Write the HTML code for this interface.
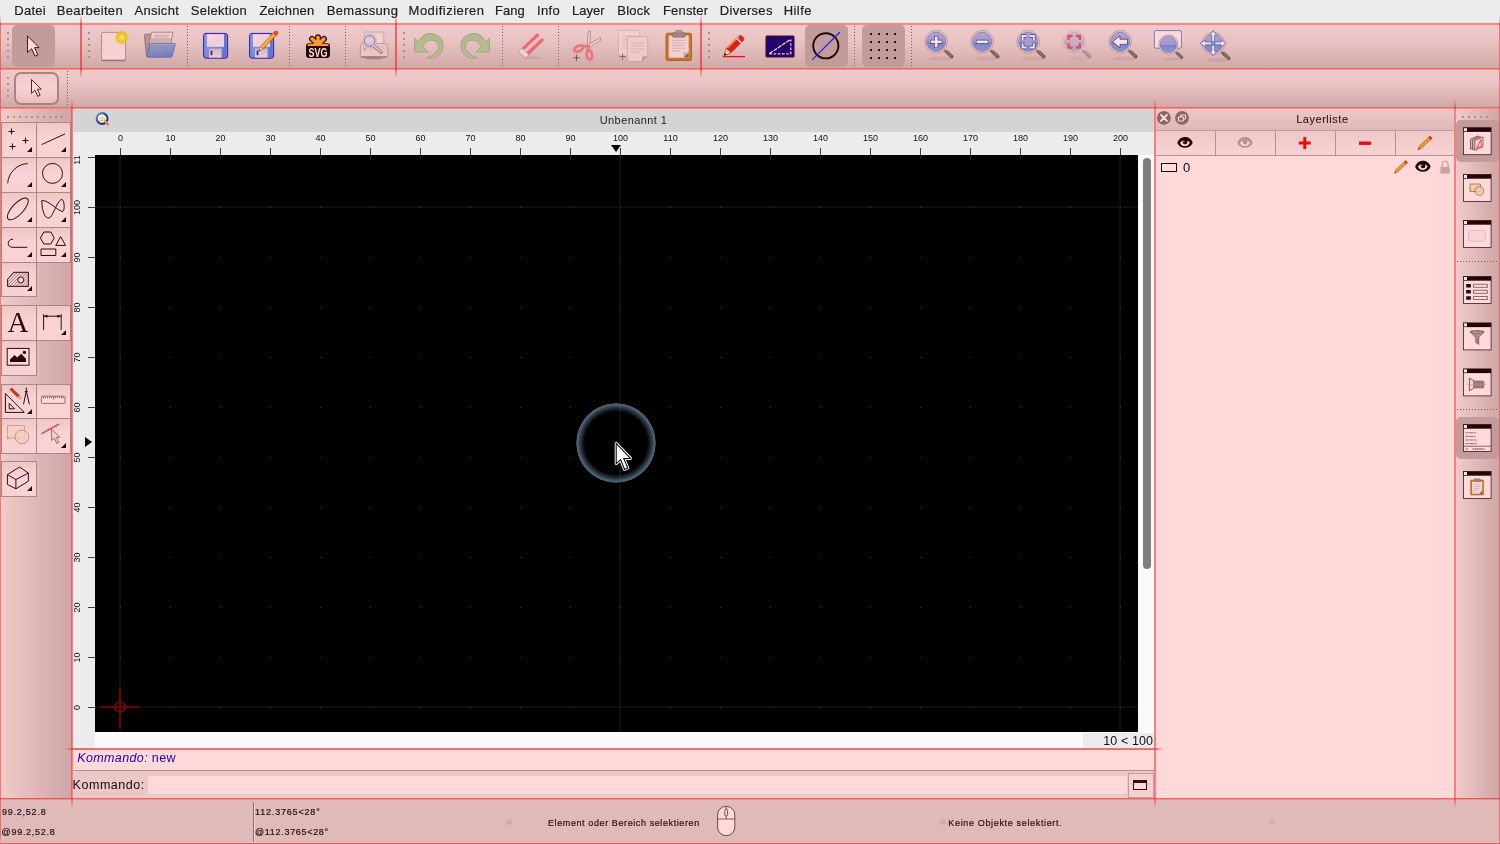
<!DOCTYPE html>
<html lang="de">
<head>
<meta charset="utf-8">
<title>QCAD - Unbenannt 1</title>
<style>
html,body{margin:0;padding:0;}
html{background:#ffd9d9;}
body{will-change:transform;width:1500px;height:844px;overflow:hidden;position:relative;background:transparent;font-family:"Liberation Sans",sans-serif;color:#1a0a0a;}
.abs,.abs *{position:absolute;}
div,span,svg{position:absolute;box-sizing:border-box;}
.t{white-space:nowrap;line-height:1;}
/* red debug lines */
.hl{height:2px;background:linear-gradient(rgba(228,40,40,0.64) 0 1px,rgba(245,60,60,0.5) 1px 2px);}
.vl{width:2px;background:rgba(240,40,40,0.64);}
.vf{background:linear-gradient(rgba(240,40,40,0) 0,rgba(240,40,40,0.64) 9px,rgba(240,40,40,0.64) calc(100% - 9px),rgba(240,40,40,0) 100%);}
.vs{background:linear-gradient(rgba(240,48,48,0) 0,rgba(240,48,48,0.54) 9px,rgba(240,48,48,0.54) calc(100% - 9px),rgba(240,48,48,0) 100%);}
.hf{background:linear-gradient(90deg,rgba(240,40,40,0) 0,rgba(240,40,40,0.64) 9px,rgba(240,40,40,0.64) calc(100% - 9px),rgba(240,40,40,0) 100%);}
#menubar{left:0;top:0;width:1500px;height:23px;background:#ececec;}
#menubar span{top:2.5px;font-size:13px;color:#1c1c1c;-webkit-text-stroke:0.18px #1c1c1c;line-height:16px;white-space:nowrap;transform-origin:0 50%;}
.tbh{background:linear-gradient(#f0caca 0%,#ebc5c5 30%,#dbb3b3 75%,#cfa8a8 100%);}
.tbv{background:linear-gradient(90deg,#f1cbcb 0%,#e9c2c2 22%,#dfb7b7 50%,#d6aeae 76%,#cea6a6 100%);}
.sel{background:#c39b9b;border-radius:5px;}
.dotv{width:1px;background:repeating-linear-gradient(#7a5a5a 0 1px,transparent 1px 3px);}
.doth{height:1px;background:repeating-linear-gradient(90deg,#7a5a5a 0 1px,transparent 1px 3px);}
.hdlv{width:2px;background:repeating-linear-gradient(#b08c8c 0 2px,transparent 2px 6px);}
.hdlh{height:2px;background:repeating-linear-gradient(90deg,#b08c8c 0 2px,transparent 2px 5px);}
.tool{width:35px;height:35px;border:1px solid #ae8585;background:linear-gradient(#eec6c6 0%,#f9d3d3 45%,#f8d2d2 100%);}
.tool svg{left:0;top:0;}
.corner{right:4.3px;bottom:5px;width:0;height:0;border-left:5px solid transparent;border-bottom:5px solid #1a0a0a;}
.ricon{width:24px;height:24px;}
</style>
</head>
<body>
<!-- menu bar -->
<div id="menubar">
<span style="left:14.2px;letter-spacing:0.3px">Datei</span>
<span style="left:56.8px;letter-spacing:0.33px">Bearbeiten</span>
<span style="left:134.5px;letter-spacing:0.27px">Ansicht</span>
<span style="left:190.7px;letter-spacing:0.31px">Selektion</span>
<span style="left:259.4px;letter-spacing:0.2px">Zeichnen</span>
<span style="left:326.7px;letter-spacing:0.32px">Bemassung</span>
<span style="left:408.6px;letter-spacing:0.48px">Modifizieren</span>
<span style="left:494.9px;letter-spacing:0.07px">Fang</span>
<span style="left:536.9px;letter-spacing:0.4px">Info</span>
<span style="left:572.0px;letter-spacing:0.0px">Layer</span>
<span style="left:617.2px;letter-spacing:0.28px">Block</span>
<span style="left:663.0px;letter-spacing:0.17px">Fenster</span>
<span style="left:719.8px;letter-spacing:0.29px">Diverses</span>
<span style="left:783.8px;letter-spacing:0.4px">Hilfe</span>
</div>
<!-- toolbar backgrounds -->
<div class="tbh" style="left:0;top:25px;width:1500px;height:43px"></div>
<div class="tbh" style="left:0;top:70px;width:1500px;height:37px"></div>
<div class="tbv" style="left:0;top:109px;width:72px;height:690px"></div>
<div class="tbv" style="left:1456px;top:109px;width:44px;height:690px"></div>
<!-- status bar -->
<div style="left:0;top:800px;width:1500px;height:44px;background:#e0b9b9"></div>
<!-- document area -->
<div style="left:73px;top:109px;width:1081px;height:23px;background:#d4d4d4"></div>
<div style="left:73px;top:109px;width:1081px;height:1px;background:#dcdfdf"></div>
<div class="t" style="left:599.7px;top:113.8px;font-size:11px;line-height:13px;letter-spacing:0.42px;color:#1f1f1f">Unbenannt 1</div>
<svg width="18" height="18" viewBox="93 110 18 18" style="left:93px;top:110px"><defs><linearGradient id="qg" x1="0" y1="0" x2="1" y2="1"><stop offset="0" stop-color="#8fa0cc"/><stop offset="0.45" stop-color="#2a468c"/><stop offset="1" stop-color="#1a2f78"/></linearGradient></defs><circle cx="102.1" cy="118.5" r="5.4" fill="#f4f4f6" stroke="url(#qg)" stroke-width="2.1"/><path d="M99 118.4 H105 M102 115.4 V121.4" stroke="#b8b8c0" stroke-width="0.6"/><path d="M99.4 120.6 H102.4" stroke="#e88" stroke-width="0.7"/><path d="M102.4 118.6 L107.2 123.6" stroke="#f5a21a" stroke-width="2.2" stroke-linecap="round"/><path d="M102.2 118.4 L103.6 119.8" stroke="#f6e3a0" stroke-width="1.6" stroke-linecap="round"/><circle cx="107.6" cy="124.2" r="1.2" fill="#e46a6a"/></svg>
<div style="left:73px;top:132px;width:1081px;height:23px;background:#ececec"></div>
<div style="left:73px;top:155px;width:22px;height:594px;background:#ececec"></div>
<div style="left:1138px;top:155px;width:16px;height:577px;background:#fafafa"></div>
<div style="left:95px;top:732px;width:1059px;height:17px;background:#fafafa"></div>
<div style="left:1143px;top:158px;width:8px;height:411px;border-radius:4px;background:#7e7e7e"></div>
<div style="left:1083px;top:732.6px;width:71px;height:15.4px;background:#ebebeb"></div>
<div class="t" style="left:1103.2px;top:733.6px;font-size:12.5px;line-height:15px;letter-spacing:0.12px;color:#111">10 &lt; 100</div>
<div id="canvas" style="left:95px;top:155px;width:1043px;height:577px;background:#000;overflow:hidden">
<div style="left:24px;top:0;width:2px;height:577px;background:#0e0e0e"></div>
<div style="left:524px;top:0;width:2px;height:577px;background:#0e0e0e"></div>
<div style="left:1024px;top:0;width:2px;height:577px;background:#0e0e0e"></div>
<div style="left:0;top:51px;width:1043px;height:2px;background:#0e0e0e"></div>
<div style="left:0;top:551px;width:1043px;height:2px;background:#0e0e0e"></div>
<svg width="1043" height="577" style="left:0;top:0"><defs><pattern id="gd" x="25" y="2" width="50" height="50" patternUnits="userSpaceOnUse"><rect x="0" y="0" width="1" height="1" fill="#3c3c3c"/></pattern></defs><rect width="1043" height="577" fill="url(#gd)"/>
<g stroke="#6c0000" stroke-width="2" fill="none"><line x1="5" y1="552" x2="45" y2="552"/><line x1="25" y1="532" x2="25" y2="572"/></g><circle cx="25" cy="552" r="5" fill="none" stroke="#ac0000" stroke-width="1.1"/>
<defs><radialGradient id="ring" cx="50%" cy="50%" r="50%"><stop offset="0.78" stop-color="#465868" stop-opacity="0"/><stop offset="0.88" stop-color="#465868" stop-opacity="0.55"/><stop offset="0.95" stop-color="#4e6476" stop-opacity="0.92"/><stop offset="0.985" stop-color="#52687a" stop-opacity="0.95"/><stop offset="1" stop-color="#52687a" stop-opacity="0"/></radialGradient></defs>
<circle cx="521" cy="288" r="40" fill="url(#ring)"/>
<path d="M521.2 288.4 L521.2 308.6 L525.6 304.6 L529.6 314.4 L532.8 313 L528.8 303.6 L535.6 303.4 Z" fill="#fff" stroke="#fff" stroke-width="3" stroke-linejoin="round"/><path d="M521.2 288.4 L521.2 308.6 L525.6 304.6 L529.6 314.4 L532.8 313 L528.8 303.6 L535.6 303.4 Z" fill="#fff" stroke="#0a0a0a" stroke-width="1.1" stroke-linejoin="miter"/>
</svg>
</div>
<div id="hruler" style="left:95px;top:132px;width:1059px;height:23px;overflow:hidden">
<div style="left:25px;top:16px;width:1px;height:7px;background:#3c3c3c"></div><div class="t" style="left:5px;top:0.6px;width:41px;text-align:center;font-size:9px;line-height:11px;color:#111">0</div>
<div style="left:75px;top:16px;width:1px;height:7px;background:#3c3c3c"></div><div class="t" style="left:55px;top:0.6px;width:41px;text-align:center;font-size:9px;line-height:11px;color:#111">10</div>
<div style="left:125px;top:16px;width:1px;height:7px;background:#3c3c3c"></div><div class="t" style="left:105px;top:0.6px;width:41px;text-align:center;font-size:9px;line-height:11px;color:#111">20</div>
<div style="left:175px;top:16px;width:1px;height:7px;background:#3c3c3c"></div><div class="t" style="left:155px;top:0.6px;width:41px;text-align:center;font-size:9px;line-height:11px;color:#111">30</div>
<div style="left:225px;top:16px;width:1px;height:7px;background:#3c3c3c"></div><div class="t" style="left:205px;top:0.6px;width:41px;text-align:center;font-size:9px;line-height:11px;color:#111">40</div>
<div style="left:275px;top:16px;width:1px;height:7px;background:#3c3c3c"></div><div class="t" style="left:255px;top:0.6px;width:41px;text-align:center;font-size:9px;line-height:11px;color:#111">50</div>
<div style="left:325px;top:16px;width:1px;height:7px;background:#3c3c3c"></div><div class="t" style="left:305px;top:0.6px;width:41px;text-align:center;font-size:9px;line-height:11px;color:#111">60</div>
<div style="left:375px;top:16px;width:1px;height:7px;background:#3c3c3c"></div><div class="t" style="left:355px;top:0.6px;width:41px;text-align:center;font-size:9px;line-height:11px;color:#111">70</div>
<div style="left:425px;top:16px;width:1px;height:7px;background:#3c3c3c"></div><div class="t" style="left:405px;top:0.6px;width:41px;text-align:center;font-size:9px;line-height:11px;color:#111">80</div>
<div style="left:475px;top:16px;width:1px;height:7px;background:#3c3c3c"></div><div class="t" style="left:455px;top:0.6px;width:41px;text-align:center;font-size:9px;line-height:11px;color:#111">90</div>
<div style="left:525px;top:16px;width:1px;height:7px;background:#3c3c3c"></div><div class="t" style="left:505px;top:0.6px;width:41px;text-align:center;font-size:9px;line-height:11px;color:#111">100</div>
<div style="left:575px;top:16px;width:1px;height:7px;background:#3c3c3c"></div><div class="t" style="left:555px;top:0.6px;width:41px;text-align:center;font-size:9px;line-height:11px;color:#111">110</div>
<div style="left:625px;top:16px;width:1px;height:7px;background:#3c3c3c"></div><div class="t" style="left:605px;top:0.6px;width:41px;text-align:center;font-size:9px;line-height:11px;color:#111">120</div>
<div style="left:675px;top:16px;width:1px;height:7px;background:#3c3c3c"></div><div class="t" style="left:655px;top:0.6px;width:41px;text-align:center;font-size:9px;line-height:11px;color:#111">130</div>
<div style="left:725px;top:16px;width:1px;height:7px;background:#3c3c3c"></div><div class="t" style="left:705px;top:0.6px;width:41px;text-align:center;font-size:9px;line-height:11px;color:#111">140</div>
<div style="left:775px;top:16px;width:1px;height:7px;background:#3c3c3c"></div><div class="t" style="left:755px;top:0.6px;width:41px;text-align:center;font-size:9px;line-height:11px;color:#111">150</div>
<div style="left:825px;top:16px;width:1px;height:7px;background:#3c3c3c"></div><div class="t" style="left:805px;top:0.6px;width:41px;text-align:center;font-size:9px;line-height:11px;color:#111">160</div>
<div style="left:875px;top:16px;width:1px;height:7px;background:#3c3c3c"></div><div class="t" style="left:855px;top:0.6px;width:41px;text-align:center;font-size:9px;line-height:11px;color:#111">170</div>
<div style="left:925px;top:16px;width:1px;height:7px;background:#3c3c3c"></div><div class="t" style="left:905px;top:0.6px;width:41px;text-align:center;font-size:9px;line-height:11px;color:#111">180</div>
<div style="left:975px;top:16px;width:1px;height:7px;background:#3c3c3c"></div><div class="t" style="left:955px;top:0.6px;width:41px;text-align:center;font-size:9px;line-height:11px;color:#111">190</div>
<div style="left:1025px;top:16px;width:1px;height:7px;background:#3c3c3c"></div><div class="t" style="left:1005px;top:0.6px;width:41px;text-align:center;font-size:9px;line-height:11px;color:#111">200</div>
</div>
<div id="vruler" style="left:73px;top:155px;width:22px;height:577px;overflow:hidden">
<div style="left:15px;top:552px;width:7px;height:1px;background:#3c3c3c"></div><div class="t" style="left:-15.700000000000003px;top:547px;width:41px;height:11px;text-align:center;font-size:9px;line-height:11px;color:#111;transform:rotate(-90deg)">0</div>
<div style="left:15px;top:502px;width:7px;height:1px;background:#3c3c3c"></div><div class="t" style="left:-15.700000000000003px;top:497px;width:41px;height:11px;text-align:center;font-size:9px;line-height:11px;color:#111;transform:rotate(-90deg)">10</div>
<div style="left:15px;top:452px;width:7px;height:1px;background:#3c3c3c"></div><div class="t" style="left:-15.700000000000003px;top:447px;width:41px;height:11px;text-align:center;font-size:9px;line-height:11px;color:#111;transform:rotate(-90deg)">20</div>
<div style="left:15px;top:402px;width:7px;height:1px;background:#3c3c3c"></div><div class="t" style="left:-15.700000000000003px;top:397px;width:41px;height:11px;text-align:center;font-size:9px;line-height:11px;color:#111;transform:rotate(-90deg)">30</div>
<div style="left:15px;top:352px;width:7px;height:1px;background:#3c3c3c"></div><div class="t" style="left:-15.700000000000003px;top:347px;width:41px;height:11px;text-align:center;font-size:9px;line-height:11px;color:#111;transform:rotate(-90deg)">40</div>
<div style="left:15px;top:302px;width:7px;height:1px;background:#3c3c3c"></div><div class="t" style="left:-15.700000000000003px;top:297px;width:41px;height:11px;text-align:center;font-size:9px;line-height:11px;color:#111;transform:rotate(-90deg)">50</div>
<div style="left:15px;top:252px;width:7px;height:1px;background:#3c3c3c"></div><div class="t" style="left:-15.700000000000003px;top:247px;width:41px;height:11px;text-align:center;font-size:9px;line-height:11px;color:#111;transform:rotate(-90deg)">60</div>
<div style="left:15px;top:202px;width:7px;height:1px;background:#3c3c3c"></div><div class="t" style="left:-15.700000000000003px;top:197px;width:41px;height:11px;text-align:center;font-size:9px;line-height:11px;color:#111;transform:rotate(-90deg)">70</div>
<div style="left:15px;top:152px;width:7px;height:1px;background:#3c3c3c"></div><div class="t" style="left:-15.700000000000003px;top:147px;width:41px;height:11px;text-align:center;font-size:9px;line-height:11px;color:#111;transform:rotate(-90deg)">80</div>
<div style="left:15px;top:102px;width:7px;height:1px;background:#3c3c3c"></div><div class="t" style="left:-15.700000000000003px;top:97px;width:41px;height:11px;text-align:center;font-size:9px;line-height:11px;color:#111;transform:rotate(-90deg)">90</div>
<div style="left:15px;top:52px;width:7px;height:1px;background:#3c3c3c"></div><div class="t" style="left:-15.700000000000003px;top:47px;width:41px;height:11px;text-align:center;font-size:9px;line-height:11px;color:#111;transform:rotate(-90deg)">100</div>
<div style="left:15px;top:2px;width:7px;height:1px;background:#3c3c3c"></div><div class="t" style="left:-15.700000000000003px;top:-3px;width:41px;height:11px;text-align:center;font-size:9px;line-height:11px;color:#111;transform:rotate(-90deg)">110</div>
</div>
<div style="left:611px;top:145px;width:0;height:0;border-left:5.5px solid transparent;border-right:5.5px solid transparent;border-top:7px solid #000"></div>
<div style="left:85px;top:437px;width:0;height:0;border-top:5.5px solid transparent;border-bottom:5.5px solid transparent;border-left:7px solid #000"></div>
<div style="left:73px;top:750px;width:1081px;height:48px;background:#ffd9d9"></div>
<div class="t" style="left:77.2px;top:750.8px;font-size:12.5px;line-height:15px;letter-spacing:0.38px;color:#1d00b4"><i>Kommando:</i> new</div>
<div style="left:73px;top:770px;width:1081px;height:1px;background:#b89090"></div>
<div style="left:73px;top:771px;width:1081px;height:27px;background:#ebc7c7"></div>
<div class="t" style="left:72.6px;top:778.1px;font-size:12.5px;line-height:15px;letter-spacing:0.54px;color:#1a0a0a">Kommando:</div>
<div style="left:148px;top:776px;width:979px;height:18px;background:#ffd9d9"></div>
<div style="left:1127.5px;top:772.5px;width:26px;height:25px;background:#f6cfcf;border:1px solid #c49a9a"></div>
<div style="left:1133.4px;top:780px;width:13.6px;height:9.6px;border:1px solid #2a1212;border-top:3px solid #2a1212;background:#ffd9d9"></div>
<!-- top toolbar: selected backgrounds, handles, separators -->
<div class="sel" style="left:12px;top:25px;width:43px;height:42px"></div>
<div class="sel" style="left:805px;top:25px;width:43px;height:42px"></div>
<div class="sel" style="left:862px;top:25px;width:43px;height:42px"></div>
<div class="hdlv" style="left:7px;top:32px;height:26px"></div>
<div class="hdlv" style="left:88px;top:32px;height:26px"></div>
<div class="hdlv" style="left:403px;top:32px;height:26px"></div>
<div class="hdlv" style="left:708px;top:32px;height:26px"></div>
<div class="dotv" style="left:187px;top:26px;height:40px"></div>
<div class="dotv" style="left:289px;top:26px;height:40px"></div>
<div class="dotv" style="left:345px;top:26px;height:40px"></div>
<div class="dotv" style="left:502px;top:26px;height:40px"></div>
<div class="dotv" style="left:558px;top:26px;height:40px"></div>
<div class="dotv" style="left:854px;top:26px;height:40px"></div>
<div class="dotv" style="left:911px;top:26px;height:40px"></div>
<!-- second row -->
<div class="hdlv" style="left:7px;top:77px;height:20px"></div>
<div style="left:14px;top:72px;width:45px;height:33px;border:2px solid #a98383;border-radius:7px;background:linear-gradient(#efc8c8 0%,#f7d1d1 50%,#e6bebe 100%)"></div>
<div class="dotv" style="left:67px;top:71px;height:35px"></div>
<svg id="tb1icons" width="1500" height="110" viewBox="0 0 1500 110" style="left:0;top:0">
<defs>
<linearGradient id="gLens" x1="0" y1="0" x2="0" y2="1"><stop offset="0" stop-color="#b2a6cf"/><stop offset="0.5" stop-color="#9a98cf"/><stop offset="0.52" stop-color="#7a82c4"/><stop offset="1" stop-color="#9098d0"/></linearGradient>
<linearGradient id="gFolder" x1="0" y1="0" x2="0.3" y2="1"><stop offset="0" stop-color="#9a94c0"/><stop offset="0.6" stop-color="#8a8cc0"/><stop offset="1" stop-color="#6e7ebc"/></linearGradient>
<linearGradient id="gUndo" x1="0" y1="0" x2="0" y2="1"><stop offset="0" stop-color="#a9b98c"/><stop offset="1" stop-color="#c4bb90"/></linearGradient>
<radialGradient id="gGlow"><stop offset="0" stop-color="#fff4d8"/><stop offset="0.22" stop-color="#f7da5a"/><stop offset="0.5" stop-color="#eec71e"/><stop offset="0.72" stop-color="#ecc51e" stop-opacity="0.85"/><stop offset="1" stop-color="#ecc520" stop-opacity="0"/></radialGradient>
<linearGradient id="gFlop" x1="0" y1="0" x2="1" y2="1"><stop offset="0" stop-color="#8a98e0"/><stop offset="1" stop-color="#6a7cd8"/></linearGradient><linearGradient id="gLabel" x1="0" y1="0" x2="1" y2="1"><stop offset="0" stop-color="#fadada"/><stop offset="0.5" stop-color="#ecd0de"/><stop offset="1" stop-color="#f8d6d8"/></linearGradient><linearGradient id="gShut" x1="0" y1="0" x2="0" y2="1"><stop offset="0" stop-color="#d8b4c4"/><stop offset="1" stop-color="#f0cccc"/></linearGradient>
<g id="mag">
<ellipse cx="5" cy="16.6" rx="12" ry="2" fill="#a07878" opacity="0.2"/>
<path d="M8.2 8.6 L11 11.2" stroke="#9a7474" stroke-width="2.2" stroke-linecap="round"/>
<path d="M10.6 10.2 L15.6 14.8" stroke="#7a5656" stroke-width="3.5" stroke-linecap="round"/>
<path d="M10.6 9.8 L15.4 14.2" stroke="#9b7a7a" stroke-width="1.2" stroke-linecap="round"/>
<circle cx="0" cy="0" r="11.3" fill="#f1cdc9" stroke="#b89292" stroke-width="0.9"/>
<circle cx="0" cy="0" r="9.6" fill="url(#gLens)" stroke="#7e78ad" stroke-width="0.8"/>
</g>
</defs>
<!-- pointer -->
<path d="M27.5 36 L27.5 52.6 L31.6 48.8 L35.1 56.2 L37.9 54.9 L34.6 47.6 L39.2 47.6 Z" fill="#ffd9d9" stroke="#3a1c1c" stroke-width="1" stroke-linejoin="round"/>
<path d="M31.5 79.5 L31.5 93.4 L34.9 90.2 L37.8 96.4 L40.1 95.3 L37.4 89.2 L41.3 89.2 Z" fill="#ffd9d9" stroke="#4a2a2a" stroke-width="1" stroke-linejoin="round"/>
<!-- new -->
<path d="M102.5 32.4 H124.5 Q125.5 32.4 125.5 33.4 V59 Q125.5 60 124.5 60 H102.5 Q101.5 60 101.5 59 V33.4 Q101.5 32.4 102.5 32.4 Z" fill="#f8d2d2" stroke="#ae8686" stroke-width="0.9"/><path d="M103 42.4 H103.8 M103 49.6 H103.8" stroke="#c9a4a4" stroke-width="0.8"/>
<path d="M101.5 60.6 H125.5" stroke="#9c7474" stroke-width="1.2"/>
<circle cx="121.7" cy="37.6" r="7.4" fill="url(#gGlow)"/>
<!-- open -->
<path d="M144.4 35.6 Q144.4 34.2 145.8 34.2 H151.6 L153 36 H160 V56.6 H146.6 Z" fill="#b99292" stroke="#8a6262" stroke-width="0.8" stroke-linejoin="round"/>
<path d="M151.6 32.2 H172.8 L170.8 44 H148.2 L146.8 56 Z" fill="#f4d0d0" stroke="#9c7474" stroke-width="0.8" stroke-linejoin="round"/>
<path d="M150.8 38 L170.9 38 L170.2 43.6 H149.4 Z" fill="#c9a2a2" opacity="0.75"/>
<path d="M154.4 35.2 H169.4 M154 36.8 H168.4" stroke="#c49c9c" stroke-width="0.8"/>
<path d="M151.6 43.4 H174.6 Q175.6 43.4 175.3 44.4 L172.2 56.2 Q171.9 57.3 170.8 57.3 H148 Q146.9 57.3 147.2 56.2 L150.2 44.4 Q150.5 43.4 151.6 43.4 Z" fill="url(#gFolder)" stroke="#6870b0" stroke-width="0.8" stroke-linejoin="round"/>
<path d="M151.6 44.6 H174" stroke="#b4b0d4" stroke-width="0.8" opacity="0.8"/>
<!-- save -->
<g id="floppy">
<rect x="203.6" y="33.4" width="24" height="24.8" rx="2.4" fill="url(#gFlop)" stroke="#2e1e9c" stroke-width="1"/>
<path d="M224.5 34.2 V57.4" stroke="#5b74d6" stroke-width="3.2"/>
<rect x="207" y="34.2" width="17" height="12.6" fill="url(#gLabel)"/>
<rect x="209" y="48.6" width="12.5" height="9" fill="url(#gShut)"/>
<rect x="210.6" y="50.6" width="1.8" height="4.6" fill="#2a2ab0"/>
</g>
<!-- save as -->
<use href="#floppy" x="46" y="0"/>
<path d="M262.98 49.31 L260.22 46.69 L275.02 31.09 Q276.6 30.6 277.6 31.6 Q278.4 32.6 277.78 33.71 Z" fill="#f49a1c" stroke="#b25a0a" stroke-width="0.6" stroke-linejoin="round"/>
<path d="M261.4 47.6 L275.8 32.2" stroke="#ffcf70" stroke-width="1"/>
<path d="M275.72 35.89 L272.96 33.27 L275.02 31.09 Q276.6 30.6 277.6 31.6 Q278.4 32.6 277.78 33.71 Z" fill="#e5483c"/>
<path d="M258.6 51.2 L260.22 46.69 L262.98 49.31 Z" fill="#f2d2b4" stroke="#9a6a4a" stroke-width="0.5" stroke-linejoin="round"/>
<path d="M258.6 51.2 L259.3 49.2 L260.5 50.4 Z" fill="#2a1a1a"/>
<!-- svg -->
<rect x="306" y="43.2" width="24" height="14.7" rx="2.8" fill="#230808"/>
<g stroke-linecap="round" fill="none">
<path d="M318 43.6 V37.3 M317.4 43.8 L312 38.9 M318.6 43.8 L324 38.9" stroke="#230808" stroke-width="5.9"/>
<path d="M318 43.6 V37.3 M317.4 43.8 L312 38.9 M318.6 43.8 L324 38.9" stroke="#fb9a2c" stroke-width="3.5"/>
</g>
<path d="M307.4 46.1 V45.2 Q307.6 44 309 44 H327 Q328.4 44 328.6 45.2 V46.1 Z" fill="#fb9a2c"/>
<path d="M311.6 44.4 L318 41 L324.4 44.4 Z" fill="#fb9a2c"/>
<text x="308.6" y="56.8" font-family="Liberation Sans, sans-serif" font-weight="bold" font-size="13.4" fill="#ffdede" textLength="19" lengthAdjust="spacingAndGlyphs">SVG</text>
<!-- print preview -->
<g>
<ellipse cx="374" cy="58.2" rx="9" ry="1.4" fill="#8a5e5e" opacity="0.55"/>
<path d="M364.4 32.6 Q364.4 32 365.2 32 H383 Q383.8 32 383.8 32.8 V46 H364.4 Z" fill="#efcaca" stroke="#c9a3a3" stroke-width="0.8"/>
<path d="M376.5 34.6 H381.6 V43 H376.5 Z" fill="#f6d3d3"/>
<path d="M363.4 43.6 H384.8 Q386.6 43.6 387.2 45.4 L387.8 48 V55.6 Q387.8 57.4 386 57.4 H362.2 Q360.4 57.4 360.4 55.6 V48 L361 45.4 Q361.6 43.6 363.4 43.6 Z" fill="#ecc5c5" stroke="#b28c8c" stroke-width="0.8"/>
<path d="M362.6 46 H385.6 V50.2 H362.6 Z" fill="#e2baba" opacity="0.8"/>
<path d="M361.4 56.9 H386.8" stroke="#94686a" stroke-width="1.2"/>
<circle cx="364.6" cy="49.2" r="0.6" fill="#7a5656"/>
<path d="M373.6 45.6 L381.2 52.2" stroke="#a78282" stroke-width="3.4" stroke-linecap="round"/>
<path d="M374.4 46.2 L381 51.8" stroke="#edcaca" stroke-width="1.4" stroke-linecap="round"/>
<circle cx="369.6" cy="40.9" r="6.8" fill="#efcccc" stroke="#c9a4a4" stroke-width="0.7"/>
<circle cx="369.6" cy="40.9" r="5.3" fill="#d6c4d6" stroke="#6f78bc" stroke-width="1"/>
<path d="M365 41.6 A4.7 4.7 0 0 1 374.2 41.6 Q369.6 43.8 365 41.6 Z" fill="#e6d0da" opacity="0.8"/>
</g>
<!-- undo -->
<path id="undo" d="M414.5 37.9 L414.7 52 L428 52 L422.8 46.6 Q425.6 40.6 431.5 40.1 Q437.8 40.4 438.6 46 Q438.8 51.6 433.4 55 Q430.4 56.8 427.4 57.4 Q426.8 58.2 428.4 58.4 Q437.4 58.8 441.6 51.6 Q445.4 42.8 439 36.4 Q432 31.4 424.2 35 Q420 37.6 418.2 41.9 Z" fill="url(#gUndo)" stroke="#93a378" stroke-width="0.9" stroke-linejoin="round" opacity="0.95"/>
<use href="#undo" transform="translate(904,0) scale(-1,1)"/>
<!-- eraser -->
<g opacity="0.9">
<ellipse cx="533" cy="57.6" rx="10" ry="1.3" fill="#c09898" opacity="0.6"/>
<path d="M518.4 51.6 L537.2 33.4 L543.8 40 L525.6 58 Z" fill="#e8636a" stroke="#d05058" stroke-width="0.5"/>
<path d="M521.8 48.4 L538.8 32.6 L541.4 35.2 L524.2 50.8 Z" fill="#f2caca" opacity="0.85" transform="translate(1.2,2.4)"/>
<path d="M518.4 51.6 L522 48.2 L528.8 54.8 L525.6 58 Z" fill="#f8d6d6" stroke="#c09090" stroke-width="0.5"/>
</g>
<!-- cut -->
<g opacity="0.95">
<path d="M588.4 31.4 L590.6 31 L589.6 48 L586.6 50.6 Z" fill="#f2cfcf" stroke="#8a6a6a" stroke-width="0.6"/>
<path d="M600.4 37.6 L600.8 40.4 L589.2 47.4 L588.8 44.4 Z" fill="#f2cfcf" stroke="#8a6a6a" stroke-width="0.6"/>
<ellipse cx="578.8" cy="48.5" rx="5" ry="2.6" transform="rotate(-24 578.8 48.5)" fill="none" stroke="#e8737c" stroke-width="2.8"/>
<ellipse cx="589.4" cy="55" rx="2.7" ry="4.6" transform="rotate(-8 589.4 55)" fill="none" stroke="#e8737c" stroke-width="2.8"/>
<path d="M583.8 46.6 L588.2 45.4 L588.6 50" stroke="#e8737c" stroke-width="2.4" fill="none" stroke-linejoin="round"/>
<path d="M573.2 57.8 H579.8 M576.5 54.5 V61.1" stroke="#5a3a3a" stroke-width="0.8"/>
</g>
<!-- copy -->
<g opacity="0.9">
<path d="M618.6 30.4 H638 Q639.6 30.4 639.6 32 V55.6 H618.6 Z" fill="#f3cfcf" stroke="#cfa8a8" stroke-width="0.7"/>
<path d="M621.6 36 H636 M621.6 39 H636 M621.6 42 H627 M621.6 45 H627 M621.6 48 H627" stroke="#d9b4b4" stroke-width="0.8"/>
<path d="M627.2 36.6 H646 Q647.8 36.6 647.8 38.4 V56 L642 61.4 H628.8 Q627.2 61.4 627.2 59.8 Z" fill="#f1cccc" stroke="#c49c9c" stroke-width="0.8"/>
<path d="M631 43 H644.4 M631 46 H644.4 M631 49 H644.4 M631 52 H640" stroke="#d2abab" stroke-width="0.8"/>
<path d="M647.6 56 L642 61.2 L642 56.8 Z" fill="#b89292"/>
<path d="M619.4 56.6 H625.8 M622.6 53.4 V59.8" stroke="#6a4646" stroke-width="0.8"/>
</g>
<!-- paste -->
<rect x="666" y="33.2" width="25.6" height="27.2" rx="1.6" fill="#c87422" stroke="#a85c14" stroke-width="0.8"/>
<path d="M666.4 60.6 H691.2" stroke="#8a5a3a" stroke-width="0.8" opacity="0.5"/>
<path d="M668.8 35.6 H688.8 V57.8 H668.8 Z" fill="#f4cfcf" stroke="#d8a878" stroke-width="0.5"/>
<path d="M672 40.4 H685.6 M672 43 H685.6 M672 45.6 H684 M672 48.2 H685.6 M672 50.8 H680" stroke="#d0a6a6" stroke-width="0.8"/>
<path d="M688.6 52.6 L683.6 57.6 H688.6 Z" fill="#7a6060"/>
<path d="M683.6 52.6 H688.6 L683.6 57.6 Z" fill="#c8a4a4"/>
<rect x="672.4" y="32.6" width="12.8" height="4.6" rx="1" fill="#a88484" stroke="#8a6868" stroke-width="0.6"/>
<rect x="675.6" y="30.4" width="6.4" height="3" rx="0.8" fill="#b89494" stroke="#8a6868" stroke-width="0.6"/>
<!-- pencil with red line -->
<path d="M723 56.6 H745" stroke="#ee1111" stroke-width="1.3"/>
<path d="M724 55.6 L726.2 48.6 L738.4 36.2 Q740 34.6 742.4 36.4 Q744.6 38.6 743.2 40.4 L731 52.8 Z" fill="#df2218" stroke="#8c3a10" stroke-width="0.7" stroke-linejoin="round"/>
<path d="M727.6 47.8 L739.2 36" stroke="#ff8a6a" stroke-width="1.4"/>
<path d="M737.2 37.6 L741.8 42 L740.6 43.2 L736 38.8 Z" fill="#e8c8c8"/>
<path d="M724 55.6 L726.2 48.6 L731 52.8 Z" fill="#f0cdb0" stroke="#8c5a3a" stroke-width="0.5"/>
<path d="M724 55.6 L724.9 52.9 L726.6 54.4 Z" fill="#1a0a0a"/>
<!-- draft mode -->
<rect x="766" y="36" width="28" height="21" rx="1" fill="#23006e" stroke="#3c1630" stroke-width="1.1"/>
<path d="M769.4 53.6 L790.6 39.4" stroke="#ffe4e4" stroke-width="1.2" stroke-dasharray="4.2 0.9"/>
<path d="M769.4 53.8 H790.8 V39.4" stroke="#e8d0f0" stroke-width="1.3" fill="none" stroke-dasharray="2.6 1.6"/>
<!-- circle / line -->
<circle cx="825.8" cy="45.8" r="12.6" fill="none" stroke="#1c0606" stroke-width="1.9"/>
<path d="M812.2 59.8 L840 32" stroke="#2222dd" stroke-width="1.2"/>
<!-- grid dots -->
<g fill="#2a1010">
<rect x="870" y="33" width="2" height="2"/><rect x="878" y="33" width="2" height="2"/><rect x="886" y="33" width="2" height="2"/><rect x="894" y="33" width="2" height="2"/>
<rect x="870" y="41" width="2" height="2"/><rect x="878" y="41" width="2" height="2"/><rect x="886" y="41" width="2" height="2"/><rect x="894" y="41" width="2" height="2"/>
<rect x="870" y="49" width="2" height="2"/><rect x="878" y="49" width="2" height="2"/><rect x="886" y="49" width="2" height="2"/><rect x="894" y="49" width="2" height="2"/>
<rect x="870" y="57" width="2" height="2"/><rect x="878" y="57" width="2" height="2"/><rect x="886" y="57" width="2" height="2"/><rect x="894" y="57" width="2" height="2"/>
</g>
<!-- zoom in -->
<use href="#mag" x="936.2" y="41.8"/>
<path d="M930.2 41.8 H942.2 M936.2 35.8 V47.8" stroke="#4a4a9a" stroke-width="4.2"/>
<path d="M930.8 41.8 H941.6 M936.2 36.4 V47.2" stroke="#ffe0e0" stroke-width="2.6"/>
<!-- zoom out -->
<use href="#mag" x="982.2" y="41.8"/>
<path d="M976 41.8 H988.4" stroke="#4a4a9a" stroke-width="4.2"/>
<path d="M976.6 41.8 H987.8" stroke="#ffe0e0" stroke-width="2.6"/>
<!-- zoom auto -->
<use href="#mag" x="1028.2" y="41.8"/>
<rect x="1024.6" y="38.6" width="7.2" height="6.4" fill="#a8a0cc"/>
<path d="M1022.6 40 V36 H1026.6 M1029.8 36 H1033.8 V40 M1033.8 43.6 V47.6 H1029.8 M1026.6 47.6 H1022.6 V43.6" fill="none" stroke="#3c3c90" stroke-width="3.4"/>
<path d="M1022.6 40 V36 H1026.6 M1029.8 36 H1033.8 V40 M1033.8 43.6 V47.6 H1029.8 M1026.6 47.6 H1022.6 V43.6" fill="none" stroke="#ffe0e0" stroke-width="2"/>
<!-- zoom selection (disabled) -->
<g opacity="0.45"><use href="#mag" x="1074.2" y="41.8"/></g>
<rect x="1070.6" y="38.6" width="7.2" height="6.4" fill="#c8b0c8" opacity="0.8"/>
<path d="M1068.6 40 V36 H1072.6 M1075.8 36 H1079.8 V40 M1079.8 43.6 V47.6 H1075.8 M1072.6 47.6 H1068.6 V43.6" fill="none" stroke="#ee4a50" stroke-width="2.4"/>
<!-- zoom previous -->
<use href="#mag" x="1120.2" y="41.8"/>
<path d="M1112.6 41.8 L1120 35.6 V39.2 H1127.4 V44.4 H1120 V48 Z" fill="#ffe0e0" stroke="#4a4a9a" stroke-width="0.9" stroke-linejoin="round"/>
<!-- window zoom -->
<rect x="1154.4" y="30.6" width="27" height="17.6" rx="1.4" fill="#ffd9d9" stroke="#6a70c0" stroke-width="0.9"/>
<g transform="translate(1168.4,44.6) scale(0.86)"><use href="#mag"/></g>
<!-- pan zoom -->
<use href="#mag" x="1213.2" y="43.4"/>
<g fill="#ffe0e0" stroke="#5a66b8" stroke-width="0.8" stroke-linejoin="round">
<path d="M1213.2 30.4 L1216.6 35.4 H1214.6 V41.6 H1211.8 V35.4 H1209.8 Z"/>
<path d="M1213.2 56 L1216.6 51 H1214.6 V45.2 H1211.8 V51 H1209.8 Z"/>
<path d="M1200.2 43.4 L1205.2 40 V42 H1211.4 V44.8 H1205.2 V46.8 Z"/>
<path d="M1226.2 43.4 L1221.2 40 V42 H1215 V44.8 H1221.2 V46.8 Z"/>
</g>
</svg>
<!-- left tool matrix -->
<div class="hdlh" style="left:7px;top:116px;width:56px;background:repeating-linear-gradient(90deg,#b08c8c 0 2px,transparent 2px 6px)"></div>
<div class="tool" style="left:1px;top:122px;width:36px;height:36px"><div class="corner"></div></div>
<div class="tool" style="left:36px;top:122px;width:35px;height:36px"><div class="corner"></div></div>
<div class="tool" style="left:1px;top:157px;width:36px;height:36px"><div class="corner"></div></div>
<div class="tool" style="left:36px;top:157px;width:35px;height:36px"><div class="corner"></div></div>
<div class="tool" style="left:1px;top:192px;width:36px;height:36px"><div class="corner"></div></div>
<div class="tool" style="left:36px;top:192px;width:35px;height:36px"><div class="corner"></div></div>
<div class="tool" style="left:1px;top:227px;width:36px;height:36px"><div class="corner"></div></div>
<div class="tool" style="left:36px;top:227px;width:35px;height:36px"><div class="corner"></div></div>
<div class="tool" style="left:1px;top:261.5px;width:36px;height:35px"><div class="corner"></div></div>
<div class="tool" style="left:1px;top:305px;width:36px;height:36px"></div>
<div class="tool" style="left:36px;top:305px;width:35px;height:36px"><div class="corner"></div></div>
<div class="tool" style="left:1px;top:339.5px;width:36px;height:36px"></div>
<div class="tool" style="left:1px;top:383.5px;width:36px;height:36px"><div class="corner"></div></div>
<div class="tool" style="left:36px;top:383.5px;width:35px;height:36px"></div>
<div class="tool" style="left:1px;top:418px;width:36px;height:36px"></div>
<div class="tool" style="left:36px;top:418px;width:35px;height:36px"><div class="corner"></div></div>
<div class="tool" style="left:1px;top:461px;width:36px;height:36px"><div class="corner"></div></div>
<svg width="72" height="400" viewBox="0 120 72 400" style="left:0;top:120px">
<path d="M8.5 131.5 H14.5 M11.5 128.5 V134.5 M22.5 140.5 H28.5 M25.5 137.5 V143.5 M9.5 146.5 H15.5 M12.5 143.5 V149.5" fill="none" stroke="#2a0e0e" stroke-width="1" stroke-width="1.1"/>
<path d="M41.6 144.6 L65 133.9" fill="none" stroke="#2a0e0e" stroke-width="1"/>
<path d="M7.7 183.3 A21 21 0 0 1 27.7 163.6" fill="none" stroke="#2a0e0e" stroke-width="1"/>
<circle cx="52.5" cy="173.4" r="10" fill="none" stroke="#2a0e0e" stroke-width="1"/>
<ellipse cx="17.8" cy="208.9" rx="14" ry="5.6" transform="rotate(-47 17.8 208.9)" fill="none" stroke="#2a0e0e" stroke-width="1"/>
<path d="M41.8 200.6 C42 212 45 218.6 49 218 C53 217 56 203 61 199.6 C64.5 198 65 210 63 211.4 C59 212 48 199.5 41.8 200.6 Z" fill="none" stroke="#2a0e0e" stroke-width="1"/>
<path d="M13 239.2 C6.6 239 6.6 247.6 13 247.3 L27.4 247.3" fill="none" stroke="#2a0e0e" stroke-width="1"/>
<path d="M40.4 238 L43.8 232 H50.8 L54.2 238 L50.8 244 H43.8 Z M60.6 236.6 L65.6 245.4 H55.8 Z M41 249 H55.8 V255.5 H41 Z" fill="none" stroke="#2a0e0e" stroke-width="1"/>
<defs><pattern id="hat" width="2.2" height="2.2" patternUnits="userSpaceOnUse" patternTransform="rotate(45)"><line x1="0" y1="0" x2="0" y2="2.2" stroke="#5a3030" stroke-width="0.8"/></pattern></defs>
<path d="M7.6 286.4 V279.2 L13.7 272.3 H28.4 V286.4 Z" fill="url(#hat)" stroke="#2a0e0e" stroke-width="1"/>
<circle cx="20.8" cy="279.9" r="3" fill="#f6cfcf" stroke="#2a0e0e" stroke-width="0.9"/>
<text x="17.9" y="331.8" font-family="Liberation Serif, serif" font-size="29" text-anchor="middle" fill="#2a0a0a">A</text>
<path d="M43.6 314.2 V329.9 M61.2 314.2 V329.9 M43.6 316.2 H61.2" fill="none" stroke="#2a0e0e" stroke-width="1"/>
<path d="M43.8 316.2 L47.4 314.6 V317.8 Z M61 316.2 L57.4 314.6 V317.8 Z" fill="#2a0e0e"/>
<rect x="7.2" y="348.4" width="21.8" height="16.8" fill="#ffdada" stroke="#2a0e0e" stroke-width="1"/>
<path d="M10 362 L10 359.6 L14.6 355 L17.2 357.6 L21.2 353.8 L26 358.8 V362 Z" fill="#2a0606"/>
<circle cx="24.4" cy="352.4" r="1.7" fill="#2a0606"/>
<path d="M5.4 393.5 V412.4 H24.2 Z M9.2 403.4 V408.8 H14.6 Z" fill="none" stroke="#2a0e0e" stroke-width="1" stroke-width="1.1"/>
<path d="M10 389.6 L11.6 388 L19.4 395.4 L20.6 398.5 L17.6 397.2 Z" fill="#e22a1a" stroke="#8a1408" stroke-width="0.5"/>
<path d="M19.4 395.4 L20.6 398.5 L17.6 397.2 Z" fill="#f0c8a8"/>
<path d="M26.3 387.6 V391 M26.3 391 L23.5 404.4 M26.3 391 L29.4 404.4 M24.8 391.6 H27.8" fill="none" stroke="#2a0e0e" stroke-width="1"/>
<rect x="41.4" y="396.2" width="23.6" height="7.2" rx="0.8" fill="#ffdada" stroke="#8a6262" stroke-width="0.9"/>
<path d="M43.5 396.6 V398.6 M45.5 396.6 V398.2 M47.5 396.6 V398.2 M49.5 396.6 V398.2 M51.5 396.6 V398.2 M53.5 396.6 V399.6 M55.5 396.6 V398.2 M57.5 396.6 V398.2 M59.5 396.6 V398.2 M61.5 396.6 V398.2 M63 396.6 V398.6" stroke="#6a4444" stroke-width="0.8"/>
<rect x="7.6" y="425.6" width="16.8" height="12.4" fill="#f7d2c2" stroke="#c69898" stroke-width="0.9"/>
<circle cx="22" cy="436.9" r="6.9" fill="#f6cdb8" fill-opacity="0.75" stroke="#b88a86" stroke-width="0.9"/>
<circle cx="7.8" cy="438" r="1.2" fill="#f08a94"/>
<path d="M41.5 433.7 L59 424" stroke="#ee2222" stroke-width="1.2"/>
<path d="M51.6 429.2 L51.6 440.6 L54.4 438.2 L56.8 443.4 L58.8 442.4 L56.4 437.4 L59.8 437.2 Z" fill="#f6d0d0" stroke="#7a5454" stroke-width="0.8" stroke-linejoin="round"/>
<path d="M19.6 467 L7.4 474.6 L15.9 479.5 L28.4 473.1 Z M7.4 474.6 V484.5 L15.9 488.8 V479.5 M15.9 488.8 L28.4 481.2 V473.1" fill="none" stroke="#2a0e0e" stroke-width="1" stroke-linejoin="round"/>
</svg>
<!-- layer list dock -->
<div style="left:1156px;top:109px;width:298px;height:22px;background:linear-gradient(#edc7c7,#deb7b7)"></div>
<div class="t" style="left:1296.2px;top:112.6px;font-size:11px;line-height:13px;letter-spacing:0.53px;color:#3a1616;-webkit-text-stroke:0.15px #3a1616">Layerliste</div>
<svg width="40" height="20" viewBox="1156 108 40 20" style="left:1156px;top:108px"><circle cx="1163.9" cy="117.9" r="6.9" fill="#8a6666"/><path d="M1160.9 114.9 L1166.9 120.9 M1166.9 114.9 L1160.9 120.9" stroke="#ffdcdc" stroke-width="2" stroke-linecap="round"/><circle cx="1182" cy="117.9" r="6.9" fill="#8a6666"/><rect x="1180.6" y="115" width="5" height="4" rx="0.8" fill="none" stroke="#ffdcdc" stroke-width="1.1"/><rect x="1178.4" y="117" width="5" height="4" rx="0.8" fill="#8a6666" stroke="#ffdcdc" stroke-width="1.1"/></svg>
<div style="left:1156px;top:130px;width:298px;height:26px;background:linear-gradient(#eec8c8,#f9d3d3);border-top:1.2px solid #c29b9b;border-bottom:1.5px solid #b98f8f"></div>
<div style="left:1214.5px;top:131px;width:1.5px;height:24px;background:#b98f8f"></div>
<div style="left:1274.5px;top:131px;width:1.5px;height:24px;background:#b98f8f"></div>
<div style="left:1334.5px;top:131px;width:1.5px;height:24px;background:#b98f8f"></div>
<div style="left:1394.5px;top:131px;width:1.5px;height:24px;background:#b98f8f"></div>
<svg width="300" height="70" viewBox="1155 130 300 70" style="left:1155px;top:130px">
<defs><g id="eye"><path d="M-7.7 0.5 C-5.4 -7.4 5.2 -7.6 7.7 0.3 C5.4 6.6 -4.6 7.4 -7.7 0.5 Z"/></g><g id="eyein"><path d="M-4.9 0.4 C-3.4 -3.2 3.4 -3.2 4.7 0.2 C3.2 4.6 -3.2 4.8 -4.9 0.4 Z" fill="#ffd9d9"/></g>
<g id="pcl"><path d="M0 0 L1.6 -4.2 L12.2 -13.9 L14.4 -11.6 L3.9 -1.6 Z" fill="#e8962e" stroke="#a86414" stroke-width="0.5" stroke-linejoin="round"/><path d="M10.6 -12.4 L12.2 -13.9 L14.4 -11.6 L12.8 -10.1 Z" fill="#e42222"/><path d="M0 0 L1.6 -4.2 L3.9 -1.6 Z" fill="#c8905a"/><path d="M0 0 L0.7 -1.8 L1.7 -0.7 Z" fill="#3a2010"/></g></defs>
<g transform="translate(1185,142.5)"><use href="#eye" fill="#250505"/><use href="#eyein"/><circle cx="0.1" cy="-0.5" r="2.4" fill="#250505"/><circle cx="-1.2" cy="-0.9" r="0.75" fill="#b89a9a"/></g>
<g transform="translate(1245,142.5)" opacity="0.45"><use href="#eye" fill="#7a4a4a"/><use href="#eyein"/><circle cx="0.1" cy="-0.5" r="2.4" fill="#7a4a4a"/></g>
<path d="M1298.8 143 H1310.8 M1304.8 137 V149" stroke="#ee0a0a" stroke-width="3"/>
<path d="M1359 143.2 H1371" stroke="#ee0a0a" stroke-width="3.4"/>
<use href="#pcl" x="1417.9" y="149.8"/>
<rect x="1161.5" y="163.5" width="15" height="8" fill="#ffdcdc" stroke="#1a0808" stroke-width="1"/>
<text x="1183" y="172" font-family="Liberation Sans, sans-serif" font-size="13" fill="#1a0808">0</text>
<g transform="translate(1394.4,173.3) scale(0.92)"><use href="#pcl"/></g>
<g transform="translate(1422.9,166.4)"><use href="#eye" fill="#250505"/><use href="#eyein"/><circle cx="0.1" cy="-0.5" r="2.4" fill="#250505"/><circle cx="-1.2" cy="-0.9" r="0.75" fill="#b89a9a"/></g>
<path d="M1442.2 167 V164.6 Q1442.2 161.2 1445.1 161.2 Q1448 161.2 1448 164.6 V167" fill="none" stroke="#caa4a4" stroke-width="1.3"/><rect x="1440.4" y="166.8" width="9.4" height="6.8" fill="#c9a2a2"/>
</svg>
<!-- right dock toolbar -->
<div class="sel" style="left:1456px;top:120px;width:43px;height:42px"></div>
<div class="sel" style="left:1456px;top:417px;width:43px;height:42px"></div>
<div class="hdlh" style="left:1462px;top:116px;width:26px;background:repeating-linear-gradient(90deg,#b08c8c 0 2px,transparent 2px 6px)"></div>
<div class="doth" style="left:1457px;top:261px;width:42px"></div>
<div class="doth" style="left:1457px;top:409px;width:42px"></div>
<svg width="46" height="400" viewBox="1455 110 46 400" style="left:1455px;top:110px">
<defs><g id="win"><rect x="0.5" y="0.5" width="27.6" height="27" fill="#ffdada" stroke="#3a1c1c" stroke-width="0.8"/><rect x="0.5" y="0.5" width="27.6" height="4.2" fill="#240606"/><rect x="1" y="1" width="3" height="3" fill="#ffe4e4"/></g></defs>
<use href="#win" x="1463" y="127.2"/>
<use href="#win" x="1463" y="174"/>
<use href="#win" x="1463" y="220"/>
<use href="#win" x="1463" y="276"/>
<use href="#win" x="1463" y="322.4"/>
<use href="#win" x="1463" y="368.4"/>
<use href="#win" x="1463" y="424"/>
<use href="#win" x="1463" y="471"/>
<g transform="translate(1463,127.2)"><path d="M7.4 12 L15 8.6 V18.6 L7.4 22 Z" fill="#d8b0b0" stroke="#4a2a2a" stroke-width="0.6"/><path d="M9.6 12.6 L17.2 9.2 V19.2 L9.6 22.6 Z" fill="#d8b0b0" stroke="#4a2a2a" stroke-width="0.6"/><path d="M11.8 13.2 L20 9.6 V19.6 L11.8 23.2 Z" fill="#f6d0d0" stroke="#4a2a2a" stroke-width="0.6"/><path d="M13.6 21 L18 12.4 L18.4 19 Z" fill="none" stroke="#ee2222" stroke-width="0.8"/></g>
<g transform="translate(1463,174)"><rect x="7" y="10" width="10.4" height="7.6" fill="#f4caa4" stroke="#8a6440" stroke-width="0.7"/><circle cx="16.4" cy="17" r="4.4" fill="#f4caa4" fill-opacity="0.8" stroke="#8a6440" stroke-width="0.7"/></g>
<g transform="translate(1463,220)"><rect x="5.6" y="10.4" width="16.8" height="10.8" rx="2.4" fill="#f8d4d8" stroke="#d4b8d0" stroke-width="0.9"/></g>
<g transform="translate(1463,276)"><path d="M3.2 8.1 h4.6 v3.4 h-4.6 Z M3.2 14.1 h4.6 v3.4 h-4.6 Z M3.2 20.3 h4.6 v3.4 h-4.6 Z" fill="#240606"/><path d="M10.4 8.3 h14 v3 h-14 Z M10.4 14.3 h14 v3 h-14 Z M10.4 20.5 h14 v3 h-14 Z" fill="#ffe0e0" stroke="#3a1c1c" stroke-width="0.6"/></g>
<g transform="translate(1463,322.4)"><path d="M7 9.6 L12.4 15 V20.2 L15.9 22.2 V15 L21.4 9.6 Z" fill="#ae8a8a" stroke="#7a5a5a" stroke-width="0.5"/><path d="M14.2 15 V21.2 L15.9 22.2 V15 Z" fill="#8e6c6c"/><ellipse cx="14.2" cy="9.4" rx="7.2" ry="1.7" fill="#8a6666"/><ellipse cx="14.2" cy="9.7" rx="5" ry="0.9" fill="#b89494"/></g>
<g transform="translate(1463,368.4)"><path d="M6.4 9.8 L11 12.4 V19.6 L6.4 22.4 Z" fill="#f6d0d0" stroke="#4a2a2a" stroke-width="0.7"/><rect x="11" y="12.6" width="10" height="7" rx="1.2" fill="#a88686" stroke="#6a4a4a" stroke-width="0.5"/><path d="M13 12.8 V19.4 M15 12.8 V19.4 M17 12.8 V19.4 M19 12.8 V19.4" stroke="#8a6868" stroke-width="0.6"/><path d="M3.6 16 H24" stroke="#f08a94" stroke-width="0.6" stroke-dasharray="2.4 1"/></g>
<g transform="translate(1463,424)"><path d="M2.6 8.8 H13.4 M2.6 12.4 H12.4 M2.6 16 H14 M2.6 19.6 H14" stroke="#7a5a5a" stroke-width="0.9" stroke-dasharray="2.2 0.5 1.4 0.4 3 0.5"/><path d="M0.8 22.2 H28" stroke="#3a1c1c" stroke-width="0.6"/><path d="M3 25 H4.6 M9.6 25 H21.6" stroke="#5a3a3a" stroke-width="1" stroke-dasharray="1.8 0.4"/></g>
<g transform="translate(1463,471)"><rect x="7.6" y="9" width="13" height="15" rx="0.8" fill="#c87828" stroke="#a05c14" stroke-width="0.5"/><rect x="9" y="10.6" width="10.2" height="12.2" fill="#f6d2d2"/><path d="M10.6 13.6 H17.6 M10.6 15.6 H17.6 M10.6 17.6 H16 M10.6 19.6 H14.6" stroke="#c8a2a2" stroke-width="0.6"/><rect x="11" y="7.8" width="6.4" height="2.6" rx="0.6" fill="#a88484" stroke="#7a5a5a" stroke-width="0.4"/><path d="M19.2 19.8 L16.4 22.8 H19.2 Z" fill="#6a5050"/></g>
</svg>
<!-- status bar -->
<div class="t" style="left:1.9px;top:807.1px;font-size:9px;line-height:11px;color:#2a1010;-webkit-text-stroke:0.2px #2a1010;letter-spacing:0.78px">99.2,52.8</div>
<div class="t" style="left:1.6px;top:827.3px;font-size:9px;line-height:11px;color:#2a1010;-webkit-text-stroke:0.2px #2a1010;letter-spacing:0.72px">@99.2,52.8</div>
<div style="left:253px;top:802px;width:1px;height:40px;background:#8f6f6f"></div><div style="left:254px;top:802px;width:1px;height:40px;background:#f3d0d0"></div>
<div class="t" style="left:255px;top:807.1px;font-size:9px;line-height:11px;color:#2a1010;-webkit-text-stroke:0.2px #2a1010;letter-spacing:0.82px">112.3765&lt;28°</div>
<div class="t" style="left:255px;top:827.3px;font-size:9px;line-height:11px;color:#2a1010;-webkit-text-stroke:0.2px #2a1010;letter-spacing:0.69px">@112.3765&lt;28°</div>
<div style="left:506.3px;top:819.3px;width:6px;height:6px;border-radius:3px;background:#d2abab"></div>
<div style="left:940.3px;top:819.3px;width:6px;height:6px;border-radius:3px;background:#d2abab"></div>
<div style="left:1269.3px;top:819.3px;width:6px;height:6px;border-radius:3px;background:#d2abab"></div>
<div class="t" style="left:548px;top:817.5px;font-size:9px;line-height:11px;color:#2a1010;-webkit-text-stroke:0.2px #2a1010;letter-spacing:0.6px">Element oder Bereich selektieren</div>
<div class="t" style="left:948.3px;top:817.5px;font-size:9px;line-height:11px;color:#2a1010;-webkit-text-stroke:0.2px #2a1010;letter-spacing:0.66px">Keine Objekte selektiert.</div>
<svg width="22" height="34" viewBox="715 804 22 34" style="left:715px;top:804px"><rect x="717.6" y="806.4" width="17.2" height="29.2" rx="8.4" fill="#ffd9d9" stroke="#4a2a2a" stroke-width="0.8"/><path d="M717.6 819 H734.8" stroke="#4a2a2a" stroke-width="0.7"/><path d="M726.2 806.6 V809 M726.2 816 V819" stroke="#4a2a2a" stroke-width="0.7"/><rect x="724.8" y="809" width="2.8" height="7" rx="1.4" fill="#ffd9d9" stroke="#4a2a2a" stroke-width="0.8"/></svg>
<!-- red frame lines -->
<div class="hl" style="left:0;top:23px;width:1500px;background:rgba(242,70,70,0.56)"></div>
<div class="hl" style="left:0;top:68px;width:1500px"></div>
<div class="hl" style="left:0;top:107px;width:1500px"></div>
<div class="hl" style="left:0;top:798px;width:1500px"></div>
<div class="hl hf" style="left:64px;top:748px;width:1100px"></div>
<div class="vl vf vs" style="left:0;top:15px;height:829px;width:1px"></div>
<div class="vl vf" style="left:80px;top:15px;height:63px"></div>
<div class="vl vf" style="left:395px;top:15px;height:63px"></div>
<div class="vl vf" style="left:700px;top:15px;height:63px"></div>
<div class="vl vf vs" style="left:71px;top:99px;height:709px"></div>
<div class="vl vf vs" style="left:1154px;top:99px;height:709px"></div>
<div class="vl vf vs" style="left:1454px;top:99px;height:709px"></div>
<div class="vl vf vs" style="left:1499px;top:15px;height:840px;width:1px"></div>
<div class="hl" style="left:0;top:843px;width:1500px;height:1px"></div>
</body>
</html>
